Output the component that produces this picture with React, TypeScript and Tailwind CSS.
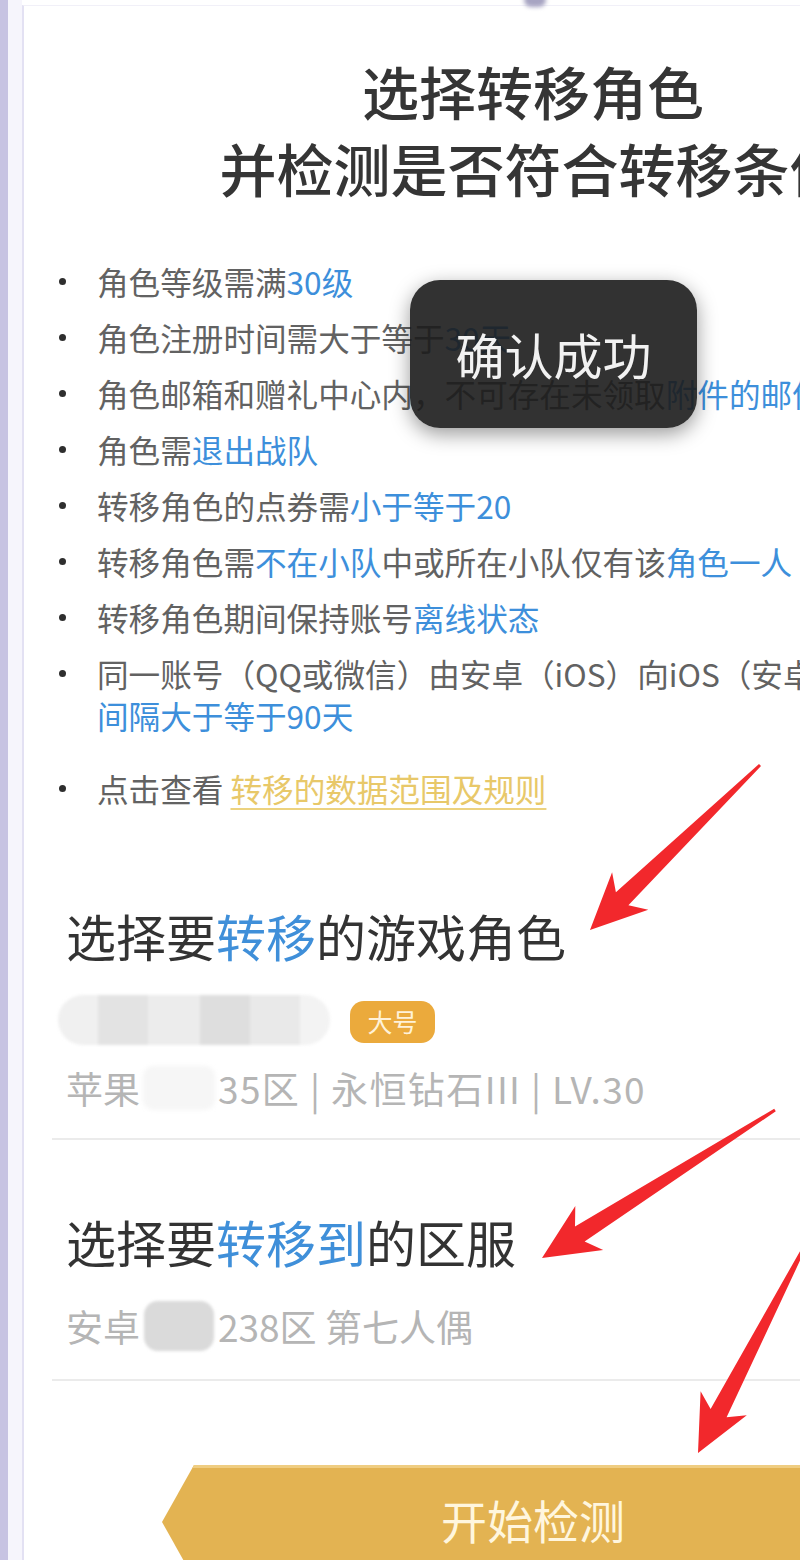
import React from 'react'

type Seg = { t: string; blue?: boolean }

const rules: Seg[][] = [
  [{ t: '角色等级需满' }, { t: '30级', blue: true }],
  [{ t: '角色注册时间需大于等于' }, { t: '30天', blue: true }],
  [{ t: '角色邮箱和赠礼中心内，不可存在未领取' }, { t: '附件的邮件', blue: true }],
  [{ t: '角色需' }, { t: '退出战队', blue: true }],
  [{ t: '转移角色的点券需' }, { t: '小于等于20', blue: true }],
  [{ t: '转移角色需' }, { t: '不在小队', blue: true }, { t: '中或所在小队仅有该' }, { t: '角色一人', blue: true }],
  [{ t: '转移角色期间保持账号' }, { t: '离线状态', blue: true }],
]

function arrowPoints(tx: number, ty: number, px: number, py: number, headLen = 56, headW = 26, neckW = 9, tailW = 1.5) {
  const dx = tx - px
  const dy = ty - py
  const len = Math.hypot(dx, dy)
  const ax = dx / len
  const ay = dy / len
  const nx = -ay
  const ny = ax
  const neck = headLen * 0.8
  const pts = [
    [tx + nx * tailW, ty + ny * tailW],
    [px + ax * neck + nx * neckW, py + ay * neck + ny * neckW],
    [px + ax * headLen + nx * headW, py + ay * headLen + ny * headW],
    [px, py],
    [px + ax * headLen - nx * headW, py + ay * headLen - ny * headW],
    [px + ax * neck - nx * neckW, py + ay * neck - ny * neckW],
    [tx - nx * tailW, ty - ny * tailW],
  ]
  return pts.map((p) => p.map((v) => v.toFixed(1)).join(',')).join(' ')
}

function Bullet({ children, className = '' }: { children: React.ReactNode; className?: string }) {
  return (
    <li className={`flex ${className}`}>
      <span className="w-[45px] h-[42px] shrink-0 flex items-center">
        <span className="ml-[7px] w-[7px] h-[7px] rounded-full bg-[#2e2e2e]" />
      </span>
      <span className="whitespace-nowrap">{children}</span>
    </li>
  )
}

export default function App() {
  return (
    <div
      className="relative w-[800px] h-[1560px] overflow-hidden bg-white"
      style={{ fontFamily: '"Noto Sans CJK SC", "Noto Sans", sans-serif' }}
    >
      <div className="flex h-full">
        <div className="w-[8px] shrink-0 bg-[#c7c3e2]" />
        <div className="w-[14px] shrink-0 bg-[#f6f5fc]" />

        {/* card */}
        <div className="mt-[5px] w-[1020px] shrink-0 border-l-2 border-t border-l-[#e3e1f3] border-t-[#f1f0f8] bg-white px-[28px]">
          <h1 className="pt-[46px] text-center text-[57px] leading-[77px] font-medium text-[#353535]">
            选择转移角色
            <br />
            并检测是否符合转移条件
          </h1>

          <ul className="mt-[54px] flex flex-col gap-[14px] text-[31.6px] leading-[42px] text-[#626262]">
            {rules.map((segs, i) => (
              <Bullet key={i}>
                {segs.map((s, j) => (
                  <span key={j} className={s.blue ? 'text-[#3d8fdb]' : ''}>
                    {s.t}
                  </span>
                ))}
              </Bullet>
            ))}
            <Bullet>
              同一账号（QQ或微信）由安卓（iOS）向iOS（安卓）转移角色
              <br />
              <span className="text-[#3d8fdb]">间隔大于等于90天</span>
            </Bullet>
            <Bullet className="mt-[17px]">
              点击查看{' '}
              <span className="text-[#e8c869] underline decoration-[#ecd27f] decoration-2 underline-offset-[6px]">
                转移的数据范围及规则
              </span>
            </Bullet>
          </ul>

          {/* role */}
          <div className="mt-[96px] pl-[14px]">
            <h2 className="text-[50px] leading-[60px] text-[#333]">
              选择要<span className="text-[#3f8fd9]">转移</span>的游戏角色
            </h2>
            <div className="mt-[30px] flex items-center -ml-[8px]">
              <div className="flex h-[50px] w-[272px] overflow-hidden rounded-full blur-[1.5px]">
                <div className="w-[40px] bg-[#f0f0f0]" />
                <div className="w-[50px] bg-[#e3e3e3]" />
                <div className="w-[52px] bg-[#ececec]" />
                <div className="w-[50px] bg-[#dedede]" />
                <div className="w-[50px] bg-[#e9e9e9]" />
                <div className="flex-1 bg-[#f3f3f3]" />
              </div>
              <span className="ml-[20px] mt-[4px] flex h-[42px] w-[85px] items-center justify-center rounded-[14px] bg-[#ebaa3c] text-[25px] text-[#fff2d8]">
                大号
              </span>
            </div>
            <div className="mt-[18px] flex items-center text-[37px] leading-[50px] text-[#b5b5b5]">
              <span>苹果</span>
              <span className="mx-[3px] h-[44px] w-[72px] rounded-[10px] bg-[#f6f6f6] blur-[2px]" />
              <span className="tracking-[1.4px]">35区 | 永恒钻石III | LV.30</span>
            </div>
          </div>
          <div className="mt-[25px] h-[2px] bg-[#ebebeb]" />

          {/* server */}
          <div className="mt-[71px] pl-[14px]">
            <h2 className="text-[50px] leading-[60px] text-[#333]">
              选择要<span className="text-[#3f8fd9]">转移到</span>的区服
            </h2>
            <div className="mt-[30px] flex items-center text-[37px] leading-[50px] text-[#b5b5b5]">
              <span>安卓</span>
              <span className="mx-[4px] h-[50px] w-[70px] rounded-[14px] bg-[#dadada] blur-[1.5px]" />
              <span>238区 第七人偶</span>
            </div>
          </div>
          <div className="mt-[28px] h-[2px] bg-[#ebebeb]" />

          {/* start button */}
          <div className="mt-[84px] flex justify-center">
            <button
              className="flex h-[114px] w-[742px] items-center justify-center bg-[#e3b352] pb-[6px] text-[46px] text-[#fff6de] shadow-[inset_0_3px_0_#efcd82] [clip-path:polygon(32px_0,calc(100%-32px)_0,100%_50%,calc(100%-32px)_100%,32px_100%,0_50%)]"
            >
              开始检测
            </button>
          </div>
        </div>
      </div>

      {/* top blob */}
      <div className="absolute left-[524px] top-[-7px] h-[14px] w-[22px] rounded-full bg-[#a7a4c2] blur-[2px]" />

      {/* toast */}
      <div className="absolute left-[410px] top-[280px] flex h-[148px] w-[287px] items-center justify-center rounded-[30px] bg-[#1c1c1c]/90 shadow-[0_6px_20px_rgba(0,0,0,0.4)]">
        <span className="text-[49px] text-[#f2f2f2]">确认成功</span>
      </div>

      {/* red annotation arrows */}
      <svg className="absolute left-0 top-0 pointer-events-none" width="800" height="1560" viewBox="0 0 800 1560">
        <g fill="#f2282c">
          <polygon points={arrowPoints(760, 765, 590, 930)} />
          <polygon points={arrowPoints(775, 1110, 542, 1258)} />
          <polygon points={arrowPoints(808, 1240, 698, 1453)} />
        </g>
      </svg>
    </div>
  )
}
